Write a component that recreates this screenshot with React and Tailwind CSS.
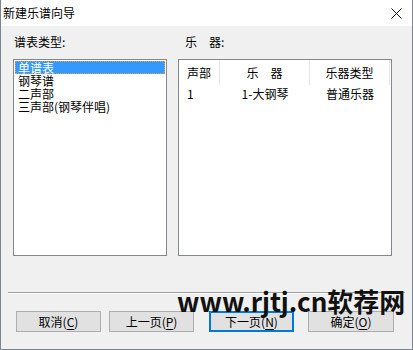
import React from "react";

const FONT = { fontFamily: '"Noto Sans CJK SC", "Noto Sans", sans-serif' };

// Windows-style close glyph
const CloseIcon = () => (
  <svg width="11" height="11" viewBox="0 0 11 11" fill="none" stroke="#111" strokeWidth="1">
    <path d="M0.5 0.5L10.5 10.5M10.5 0.5L0.5 10.5" />
  </svg>
);

const staffTypes = ["单谱表", "钢琴谱", "二声部", "三声部(钢琴伴唱)"];

function Button({ children, hot, focused, className = "" }) {
  return (
    <div
      className={`h-[21px] w-[85px] flex items-center justify-center bg-[#e1e1e1] text-[12px] text-black leading-none ${
        focused ? "border-2 border-[#0078d7]" : "border border-[#adadad]"
      } ${className}`}
    >
      <span>
        {children}(<span className="underline underline-offset-2">{hot}</span>)
      </span>
    </div>
  );
}

export default function App() {
  return (
    <div
      className="relative w-[413px] h-[350px] bg-[#f0f0f0] border-x border-b border-[#7b8694] flex flex-col overflow-hidden"
      style={FONT}
    >
      {/* title bar */}
      <div className="h-[26px] bg-white flex items-center justify-between pl-[2px] pr-[10px] shrink-0">
        <span className="text-[12px] text-black">新建乐谱向导</span>
        <CloseIcon />
      </div>

      <div className="flex pt-[6px] pl-[12px]">
        {/* staff type list */}
        <div className="w-[154px] flex flex-col">
          <div className="h-[20px] leading-[20px] text-[12px] text-black pl-[1px] mb-[7px]">谱表类型:</div>
          <div className="h-[197px] bg-white border border-[#828790] p-[1px] flex flex-col">
            {staffTypes.map((t, i) => (
              <div
                key={t}
                className={`h-[13px] leading-[12px] text-[12px] pl-[2px] ${
                  i === 0
                    ? "bg-[#3399ff] text-white border border-dotted border-[#e99a3c]"
                    : "text-black border border-transparent"
                }`}
              >
                {t}
              </div>
            ))}
          </div>
        </div>

        {/* instrument list */}
        <div className="w-[214px] ml-[11px] flex flex-col">
          <div className="h-[20px] leading-[20px] text-[12px] text-black pl-[7px] mb-[7px]">乐　器:</div>
          <div className="h-[197px] bg-white border border-[#828790] flex flex-col text-[12px] text-black">
            <div className="flex h-[25px] items-center">
              <div className="w-[41px] h-full flex items-center pl-[8px] border-r border-[#e5e5e5]">声部</div>
              <div className="w-[90px] h-full flex items-center justify-center border-r border-[#e5e5e5]">乐　器</div>
              <div className="w-[80px] h-full flex items-center justify-center border-r border-[#e5e5e5]">乐器类型</div>
            </div>
            <div className="flex h-[18px] items-center">
              <div className="w-[41px] pl-[8px]">1</div>
              <div className="w-[90px] text-center">1-大钢琴</div>
              <div className="w-[80px] text-center">普通乐器</div>
            </div>
          </div>
        </div>
      </div>

      {/* divider */}
      <div className="mt-[36px] mx-[7px] border-t border-[#a0a0a0] border-b border-b-white" />

      {/* buttons */}
      <div className="flex mt-[17px] pl-[15px]">
        <Button hot="C">取消</Button>
        <Button hot="P" className="ml-[8px]">上一页</Button>
        <Button hot="N" focused className="ml-[15px]">下一页</Button>
        <Button hot="O" className="ml-[14px] w-[86px]">确定</Button>
      </div>

      {/* watermark overlay */}
      <div className="absolute left-[176px] top-[283px] text-[26px] font-bold leading-[36px] text-[#111] whitespace-nowrap">
        www.rjtj.cn软荐网
      </div>
    </div>
  );
}
